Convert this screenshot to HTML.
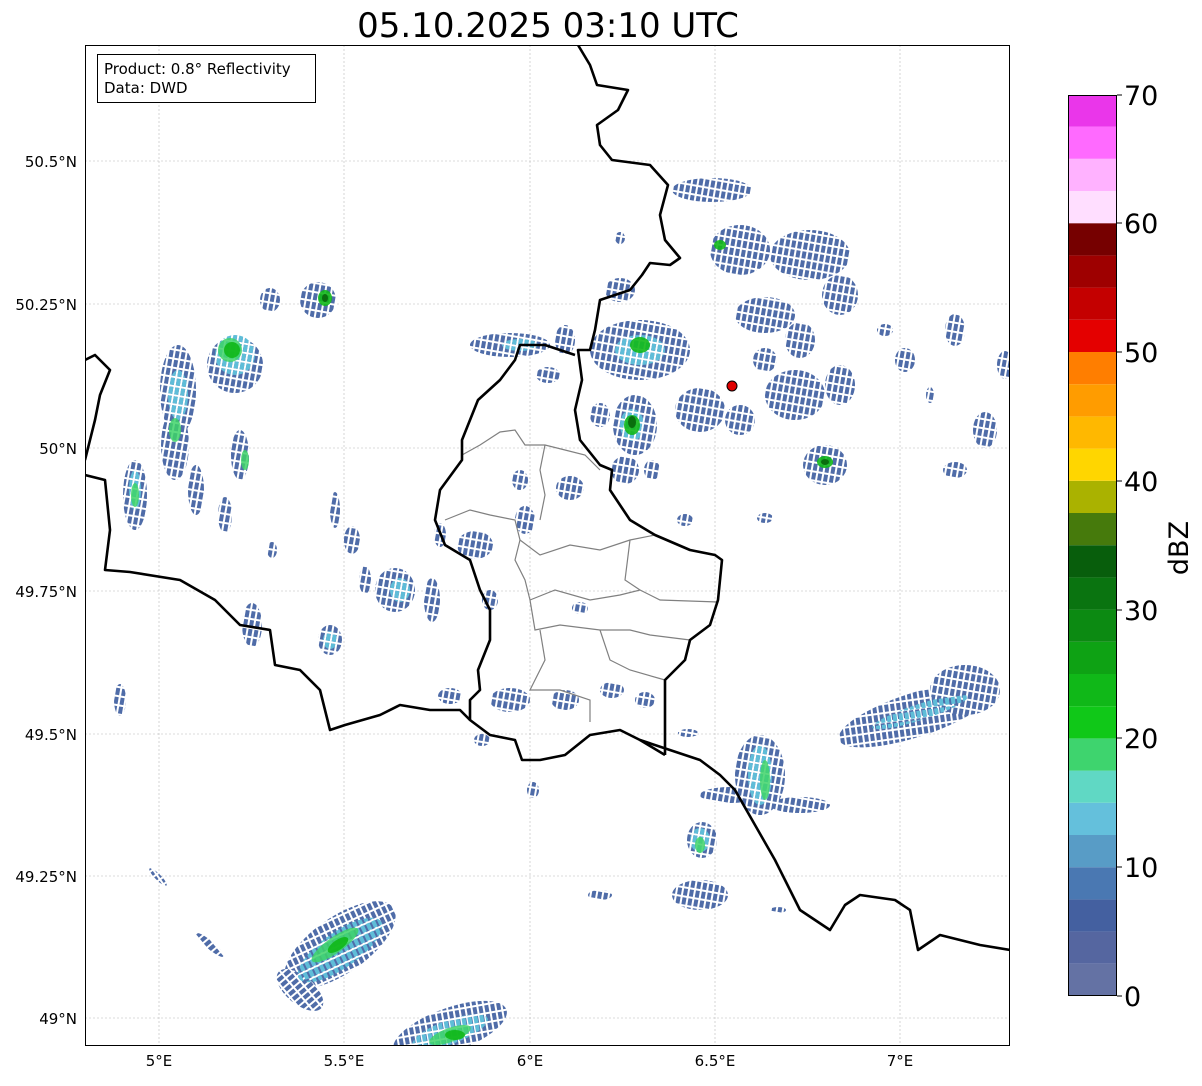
<!DOCTYPE html>
<html><head><meta charset="utf-8"><style>
html,body{margin:0;padding:0;background:#fff;}
body{width:1202px;height:1081px;overflow:hidden;font-family:"Liberation Sans","DejaVu Sans",sans-serif;}
</style></head><body>
<svg width="1202" height="1081" xmlns="http://www.w3.org/2000/svg" font-family="DejaVu Sans, Liberation Sans, sans-serif">
<defs>
<clipPath id="c"><rect x="85" y="45" width="925" height="1001"/></clipPath>
<pattern id="pb" width="6" height="9" patternUnits="userSpaceOnUse" patternTransform="rotate(10)">
<rect width="6" height="9" fill="#fff"/><rect x="0" y="0" width="4" height="7" fill="#4f6ca8"/></pattern>
<pattern id="pc" width="6" height="9" patternUnits="userSpaceOnUse" patternTransform="rotate(10)">
<rect x="0" y="0" width="4" height="7" fill="#5fbdd8"/></pattern>
</defs>
<rect width="1202" height="1081" fill="#fff"/>
<text x="548" y="37" font-size="34" text-anchor="middle" fill="#000">05.10.2025 03:10 UTC</text>
<g clip-path="url(#c)">
<g stroke="#b8b8b8" stroke-width="0.6" stroke-dasharray="2,2">
<line x1="159" y1="45" x2="159" y2="1046"/><line x1="344" y1="45" x2="344" y2="1046"/><line x1="530" y1="45" x2="530" y2="1046"/><line x1="715" y1="45" x2="715" y2="1046"/><line x1="900" y1="45" x2="900" y2="1046"/>
<line x1="85" y1="161" x2="1010" y2="161"/><line x1="85" y1="304" x2="1010" y2="304"/><line x1="85" y1="448" x2="1010" y2="448"/><line x1="85" y1="591" x2="1010" y2="591"/><line x1="85" y1="734" x2="1010" y2="734"/><line x1="85" y1="876" x2="1010" y2="876"/><line x1="85" y1="1018" x2="1010" y2="1018"/>
</g>
<g id="blobs">
<g fill="url(#pb)"><ellipse cx="235" cy="365" rx="28" ry="28"/><ellipse cx="178" cy="390" rx="18" ry="45"/><ellipse cx="175" cy="445" rx="14" ry="35"/><ellipse cx="135" cy="495" rx="12" ry="35"/><ellipse cx="240" cy="455" rx="9" ry="25"/><ellipse cx="318" cy="300" rx="18" ry="18"/><ellipse cx="270" cy="300" rx="10" ry="12"/><ellipse cx="196" cy="490" rx="8" ry="25"/><ellipse cx="225" cy="515" rx="7" ry="18"/><ellipse cx="335" cy="510" rx="5" ry="18"/><ellipse cx="352" cy="540" rx="8" ry="14"/><ellipse cx="395" cy="590" rx="20" ry="22"/><ellipse cx="432" cy="600" rx="8" ry="22"/><ellipse cx="365" cy="580" rx="6" ry="14"/><ellipse cx="330" cy="640" rx="12" ry="15"/><ellipse cx="252" cy="625" rx="10" ry="22"/><ellipse cx="272" cy="550" rx="5" ry="8"/><ellipse cx="120" cy="700" rx="6" ry="16"/>
<ellipse cx="475" cy="545" rx="18" ry="14"/><ellipse cx="440" cy="535" rx="6" ry="12"/><ellipse cx="525" cy="520" rx="10" ry="14"/><ellipse cx="570" cy="488" rx="14" ry="12"/><ellipse cx="520" cy="480" rx="8" ry="10"/><ellipse cx="490" cy="600" rx="8" ry="10"/><ellipse cx="580" cy="608" rx="8" ry="6"/><ellipse cx="510" cy="700" rx="20" ry="12"/><ellipse cx="450" cy="696" rx="12" ry="8"/><ellipse cx="565" cy="700" rx="14" ry="10"/><ellipse cx="612" cy="690" rx="12" ry="8"/><ellipse cx="645" cy="700" rx="10" ry="8"/><ellipse cx="482" cy="740" rx="8" ry="6"/><ellipse cx="533" cy="790" rx="6" ry="8"/>
<ellipse cx="510" cy="345" rx="40" ry="12"/><ellipse cx="548" cy="375" rx="12" ry="8"/><ellipse cx="565" cy="340" rx="10" ry="15"/>
<ellipse cx="640" cy="350" rx="50" ry="30"/><ellipse cx="635" cy="425" rx="22" ry="30"/><ellipse cx="600" cy="415" rx="10" ry="12"/><ellipse cx="625" cy="470" rx="14" ry="14"/><ellipse cx="652" cy="470" rx="8" ry="10"/><ellipse cx="700" cy="410" rx="25" ry="22"/><ellipse cx="740" cy="420" rx="15" ry="15"/><ellipse cx="620" cy="290" rx="15" ry="12"/><ellipse cx="712" cy="190" rx="40" ry="12"/><ellipse cx="620" cy="238" rx="5" ry="6"/>
<ellipse cx="740" cy="250" rx="30" ry="25"/><ellipse cx="810" cy="255" rx="40" ry="25"/><ellipse cx="840" cy="295" rx="18" ry="20"/><ellipse cx="765" cy="315" rx="30" ry="18"/><ellipse cx="800" cy="340" rx="15" ry="18"/><ellipse cx="795" cy="395" rx="30" ry="25"/><ellipse cx="840" cy="385" rx="15" ry="20"/><ellipse cx="825" cy="465" rx="22" ry="20"/><ellipse cx="765" cy="360" rx="12" ry="12"/><ellipse cx="905" cy="360" rx="10" ry="12"/><ellipse cx="885" cy="330" rx="8" ry="6"/><ellipse cx="955" cy="330" rx="10" ry="16"/><ellipse cx="985" cy="430" rx="12" ry="18"/><ellipse cx="955" cy="470" rx="12" ry="8"/><ellipse cx="1005" cy="365" rx="8" ry="14"/><ellipse cx="685" cy="520" rx="8" ry="6"/><ellipse cx="765" cy="518" rx="8" ry="5"/><ellipse cx="930" cy="395" rx="4" ry="8"/>
<ellipse cx="915" cy="715" rx="80" ry="22" transform="rotate(-18 915 715)"/><ellipse cx="965" cy="690" rx="35" ry="25"/><ellipse cx="760" cy="775" rx="25" ry="40"/><ellipse cx="730" cy="795" rx="30" ry="8"/><ellipse cx="800" cy="805" rx="30" ry="8"/><ellipse cx="702" cy="840" rx="15" ry="18"/><ellipse cx="700" cy="895" rx="28" ry="15"/><ellipse cx="600" cy="895" rx="12" ry="5"/><ellipse cx="688" cy="733" rx="10" ry="4"/><ellipse cx="778" cy="910" rx="8" ry="3"/>
<ellipse cx="340" cy="945" rx="65" ry="28" transform="rotate(-35 340 945)"/><ellipse cx="300" cy="990" rx="28" ry="14" transform="rotate(40 300 990)"/><ellipse cx="450" cy="1030" rx="60" ry="22" transform="rotate(-20 450 1030)"/><ellipse cx="210" cy="945" rx="18" ry="4" transform="rotate(40 210 945)"/><ellipse cx="158" cy="877" rx="12" ry="3" transform="rotate(45 158 877)"/></g>
<g fill="url(#pc)"><ellipse cx="235" cy="355" rx="20" ry="20"/><ellipse cx="178" cy="395" rx="10" ry="25"/><ellipse cx="340" cy="950" rx="50" ry="18" transform="rotate(-35 340 950)"/><ellipse cx="450" cy="1032" rx="40" ry="12" transform="rotate(-20 450 1032)"/><ellipse cx="760" cy="775" rx="12" ry="30"/><ellipse cx="700" cy="840" rx="10" ry="12"/><ellipse cx="400" cy="590" rx="10" ry="12"/><ellipse cx="640" cy="350" rx="25" ry="15"/><ellipse cx="632" cy="425" rx="12" ry="16"/><ellipse cx="330" cy="640" rx="7" ry="9"/><ellipse cx="135" cy="490" rx="6" ry="20"/><ellipse cx="520" cy="345" rx="18" ry="6"/><ellipse cx="920" cy="712" rx="50" ry="8" transform="rotate(-18 920 712)"/></g>
<g fill="#3ed468" opacity="0.85"><ellipse cx="230" cy="350" rx="12" ry="12"/><ellipse cx="175" cy="430" rx="6" ry="12"/><ellipse cx="335" cy="945" rx="28" ry="8" transform="rotate(-35 335 945)"/><ellipse cx="450" cy="1035" rx="22" ry="7" transform="rotate(-20 450 1035)"/><ellipse cx="765" cy="780" rx="5" ry="20"/><ellipse cx="700" cy="845" rx="5" ry="8"/><ellipse cx="135" cy="495" rx="4" ry="12"/><ellipse cx="245" cy="460" rx="4" ry="10"/></g>
<g fill="#10b818" opacity="0.9"><ellipse cx="232" cy="350" rx="8" ry="8"/><ellipse cx="640" cy="345" rx="10" ry="8"/><ellipse cx="632" cy="425" rx="8" ry="10"/><ellipse cx="338" cy="945" rx="12" ry="5" transform="rotate(-35 338 945)"/><ellipse cx="455" cy="1035" rx="10" ry="5"/><ellipse cx="825" cy="462" rx="8" ry="6"/><ellipse cx="325" cy="298" rx="7" ry="8"/><ellipse cx="720" cy="245" rx="6" ry="5"/></g>
<g fill="#0a6e0e"><ellipse cx="632" cy="422" rx="4" ry="6"/><ellipse cx="825" cy="462" rx="4" ry="3"/><ellipse cx="325" cy="298" rx="3" ry="4"/></g>
</g>
<g fill="none" stroke="#808080" stroke-width="1.2">
<polyline points="462,455 480,445 500,432 515,430 525,445 545,445 565,450 585,455 600,470"/>
<polyline points="445,520 470,510 490,515 515,520 520,540 540,555 570,545 600,550 630,540 655,535"/>
<polyline points="520,540 515,560 525,580 530,600 555,590 590,600 620,595 640,590 660,600 718,602"/>
<polyline points="530,600 535,630 560,625 600,630 630,630 650,635 690,640"/>
<polyline points="540,630 545,660 530,690 560,690 590,700 590,722"/>
<polyline points="600,630 610,660 630,670 665,680"/>
<polyline points="545,445 540,470 545,495 540,520"/>
<polyline points="630,540 625,580 640,590"/>
</g>
<g fill="none" stroke="#000" stroke-width="2.6" stroke-linejoin="round">
<polyline points="578,45 590,65 597,85 628,90 618,110 597,125 600,145 612,160 650,165 668,185 660,215 665,240 680,258 670,265 650,263 642,275 630,290 600,300 595,330 590,350 578,350 582,380 575,410 580,440 600,465 612,470 610,490 630,520 655,535 690,550 715,555 722,560 718,600 710,625 690,640 685,660 665,680 665,755"/>
<polyline points="575,355 545,345 520,345 515,360 500,380 478,400 470,420 462,440 462,460 440,490 435,520 445,545 470,560 480,590 490,610 490,640 478,670 480,690 470,700 470,720 490,735 515,740 522,760 540,760 565,755 590,735 620,730 640,740 665,755"/>
<polyline points="640,740 700,760 720,775 735,790 755,825 775,860 785,880 800,910 830,930 845,905 860,895 895,900 910,910 918,950 940,935 960,940 980,945 1010,950"/>
<polyline points="85,360 95,355 110,370 100,395 95,420 85,460"/>
<polyline points="85,475 105,480 110,530 105,570 130,572 180,580 215,600 240,625 270,630 275,665 300,670 320,690 330,730 345,725 380,715 400,705 430,710 460,710 470,720"/>
</g>
<circle cx="732" cy="386" r="5" fill="#e00000" stroke="#000" stroke-width="1"/>
</g>
<rect x="85.5" y="45.5" width="924" height="1000" fill="none" stroke="#000" stroke-width="1"/>
<rect x="97.5" y="54.5" width="218" height="48" fill="#fff" stroke="#000" stroke-width="1"/>
<text x="104" y="74" font-size="15">Product: 0.8° Reflectivity</text>
<text x="104" y="93" font-size="15">Data: DWD</text>
<g font-size="15" text-anchor="end">
<text x="77" y="167">50.5°N</text><text x="77" y="310">50.25°N</text><text x="77" y="454">50°N</text><text x="77" y="597">49.75°N</text><text x="77" y="740">49.5°N</text><text x="77" y="882">49.25°N</text><text x="77" y="1024">49°N</text>
</g>
<g font-size="15" text-anchor="middle">
<text x="159" y="1066">5°E</text><text x="344" y="1066">5.5°E</text><text x="530" y="1066">6°E</text><text x="715" y="1066">6.5°E</text><text x="900" y="1066">7°E</text>
</g>
<g>
<rect x="1068" y="963.8" width="49" height="32.2" fill="#6472a4"/>
<rect x="1068" y="931.6" width="49" height="32.2" fill="#5566a0"/>
<rect x="1068" y="899.4" width="49" height="32.2" fill="#4460a0"/>
<rect x="1068" y="867.2" width="49" height="32.2" fill="#4a78b2"/>
<rect x="1068" y="835" width="49" height="32.2" fill="#589cc6"/>
<rect x="1068" y="802.8" width="49" height="32.2" fill="#64c0dc"/>
<rect x="1068" y="770.6" width="49" height="32.2" fill="#60d8c4"/>
<rect x="1068" y="738.4" width="49" height="32.2" fill="#3ed46e"/>
<rect x="1068" y="706.2" width="49" height="32.2" fill="#10c818"/>
<rect x="1068" y="674" width="49" height="32.2" fill="#10b818"/>
<rect x="1068" y="641.8" width="49" height="32.2" fill="#0ea214"/>
<rect x="1068" y="609.6" width="49" height="32.2" fill="#0c8a12"/>
<rect x="1068" y="577.4" width="49" height="32.2" fill="#0a7410"/>
<rect x="1068" y="545.2" width="49" height="32.2" fill="#085e0c"/>
<rect x="1068" y="513" width="49" height="32.2" fill="#467a0c"/>
<rect x="1068" y="480.8" width="49" height="32.2" fill="#aab200"/>
<rect x="1068" y="448.6" width="49" height="32.2" fill="#ffd600"/>
<rect x="1068" y="416.4" width="49" height="32.2" fill="#ffb800"/>
<rect x="1068" y="384.2" width="49" height="32.2" fill="#ff9c00"/>
<rect x="1068" y="352" width="49" height="32.2" fill="#ff7e00"/>
<rect x="1068" y="319.8" width="49" height="32.2" fill="#e40000"/>
<rect x="1068" y="287.6" width="49" height="32.2" fill="#c40000"/>
<rect x="1068" y="255.4" width="49" height="32.2" fill="#9e0000"/>
<rect x="1068" y="223.2" width="49" height="32.2" fill="#760000"/>
<rect x="1068" y="191" width="49" height="32.2" fill="#ffdeff"/>
<rect x="1068" y="158.8" width="49" height="32.2" fill="#ffb2ff"/>
<rect x="1068" y="126.6" width="49" height="32.2" fill="#ff6aff"/>
<rect x="1068" y="95" width="49" height="31.6" fill="#ea36ea"/>
<rect x="1068.5" y="95.5" width="48" height="900" fill="none" stroke="#000" stroke-width="1"/>
<g stroke="#000" stroke-width="1"><line x1="1117" y1="996" x2="1122" y2="996"/><line x1="1117" y1="867" x2="1122" y2="867"/><line x1="1117" y1="738" x2="1122" y2="738"/><line x1="1117" y1="610" x2="1122" y2="610"/><line x1="1117" y1="481" x2="1122" y2="481"/><line x1="1117" y1="352" x2="1122" y2="352"/><line x1="1117" y1="223" x2="1122" y2="223"/><line x1="1117" y1="95" x2="1122" y2="95"/></g>
<g font-size="27"><text x="1124" y="1006">0</text><text x="1124" y="877">10</text><text x="1124" y="748">20</text><text x="1124" y="620">30</text><text x="1124" y="491">40</text><text x="1124" y="362">50</text><text x="1124" y="233">60</text><text x="1124" y="105">70</text></g>
<text x="0" y="0" font-size="27" text-anchor="middle" transform="translate(1188 548) rotate(-90)">dBZ</text>
</g>
</svg>
</body></html>
